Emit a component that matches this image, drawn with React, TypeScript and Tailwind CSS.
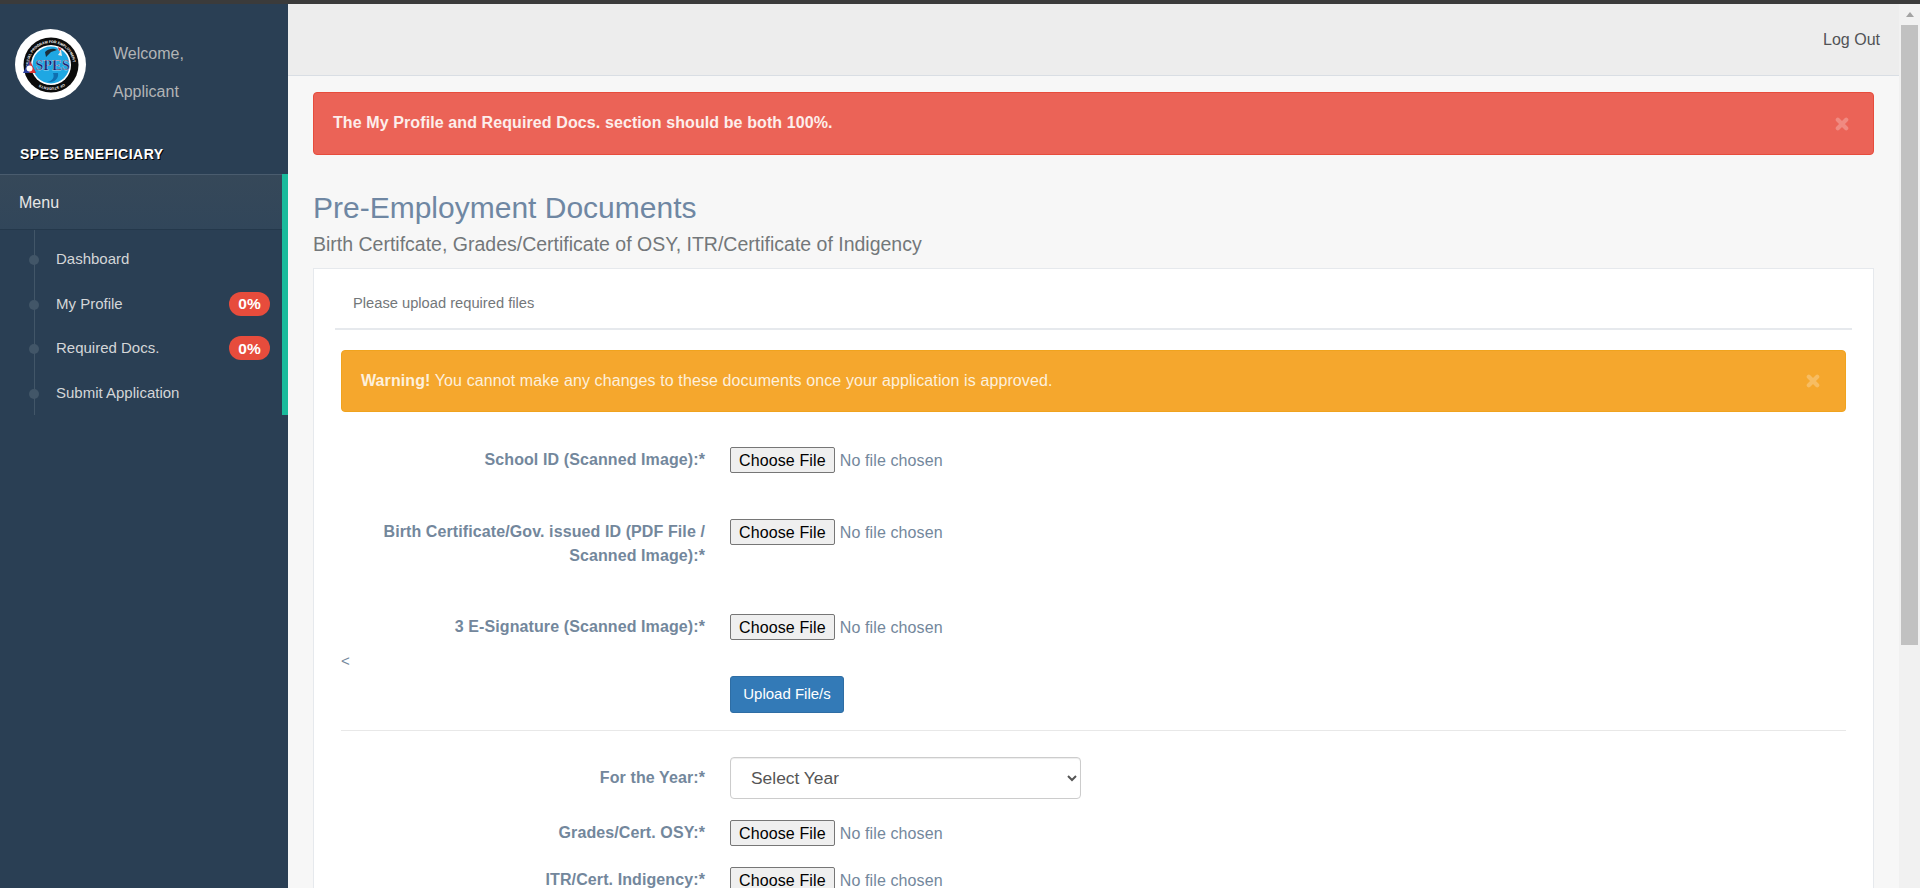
import React from "react";

function Logo() {
  return (
    <svg width="72" height="72" viewBox="0 0 72 72" className="shrink-0">
      <defs>
        <path id="ringTop" d="M14 39.9A22.3 22.3 0 1 1 58 39.9" />
        <path id="ringBottom" d="M53.5 50A22.3 22.3 0 0 1 18.5 50" />
      </defs>
      <circle cx="35.5" cy="35.5" r="35.5" fill="#ffffff" />
      <circle cx="36" cy="36" r="27.5" fill="#0b0b0b" />
      <circle cx="36" cy="36" r="20" fill="#ffffff" />
      <circle cx="36" cy="36" r="18.5" fill="#1ea7e3" />
      <path d="M30 23c4-4 9-4 12-2l-6 2-5 5z" fill="#1b2f3a" />
      <path d="M42 19l3 4-2 3 4 1-1-6z" fill="#e8e8e8" />
      <path d="M43 18l4 2-3 2z" fill="#d23a3a" />
      <path d="M38 44c2 5-1 8-6 9 7 1 12-3 11-9z" fill="#0f6fb0" />
      <text x="37.5" y="41" textAnchor="middle" fontFamily="'Liberation Serif', serif" fontWeight="700" fontSize="14.5" fill="#14206e" stroke="#ffffff" strokeWidth="0.25">SPES</text>
      <text fontFamily="'Liberation Sans', sans-serif" fontWeight="700" fontSize="3.6" fill="#ffffff">
        <textPath href="#ringTop">SPECIAL PROGRAM FOR EMPLOYMENT</textPath>
      </text>
      <text fontFamily="'Liberation Sans', sans-serif" fontWeight="700" fontSize="3.6" fill="#ffffff">
        <textPath href="#ringBottom" startOffset="16%">OF STUDENTS</textPath>
      </text>
      <path d="M8 44l6.5-13 6.5 13z" fill="#2b3f9e" />
      <path d="M14.5 31l6.5 13h-6.5z" fill="#d93636" />
      <circle cx="14.5" cy="39.5" r="3" fill="#ffffff" />
    </svg>
  );
}

function NavItem({ label, badge }: { label: string; badge?: string }) {
  return (
    <div className="relative flex h-[44.5px] items-center pl-[56px] pr-[12px] text-[15px] text-[#d4d6d8]">
      <span className="absolute left-[29px] top-[18px] h-[10px] w-[10px] rounded-full bg-[#425668]" />
      <span className="flex-1">{label}</span>
      {badge && (
        <span className="flex h-[24px] w-[41px] items-center justify-center rounded-full bg-[#E74C3C] text-[15.5px] font-bold text-white">
          {badge}
        </span>
      )}
    </div>
  );
}

function Sidebar() {
  return (
    <aside className="flex w-[288px] shrink-0 flex-col bg-[#2A3F54]">
      <div className="flex h-[135px] items-start pl-[15px] pt-[25px]">
        <Logo />
        <div className="ml-[26px] pt-[6px] text-[16px] leading-[38px] text-[#b2b4b6]">
          <div>Welcome,</div>
          <div>Applicant</div>
        </div>
      </div>
      <div className="h-[35px] pl-[20px] pt-[6px] text-[14px] font-bold leading-[18px] tracking-[0.5px] text-white [text-shadow:1px_1px_#000]">
        SPES BENEFICIARY
      </div>
      <div className="border-r-[6px] border-[#1ABB9C]">
        <div className="flex h-[56px] items-center border-y border-b-[#24384b] border-t-[#4a5c6e] bg-gradient-to-b from-[#364859] to-[#31465a] pl-[19px] pt-[1px] text-[16px] text-[#E7E7E7]">
          Menu
        </div>
        <div className="relative pt-[7px]">
          <span className="absolute bottom-0 left-[34px] top-0 w-px bg-[#425668]" />
          <NavItem label="Dashboard" />
          <NavItem label="My Profile" badge="0%" />
          <NavItem label="Required Docs." badge="0%" />
          <NavItem label="Submit Application" />
        </div>
      </div>
    </aside>
  );
}

function Close() {
  return (
    <svg width="14" height="14" viewBox="0 0 14 14" className="shrink-0 opacity-25">
      <path d="M2.8 2.8l8.4 8.4M11.2 2.8l-8.4 8.4" stroke="#ffffff" strokeWidth="4.2" strokeLinecap="round" fill="none" />
    </svg>
  );
}

function FileInput() {
  return (
    <input
      type="file"
      className="block h-[26px] w-[300px] text-[16px] leading-[26px] tracking-[0.12px] text-[#73879C] file:mr-[5px] file:h-[26px] file:rounded-[2px] file:border file:border-solid file:border-[#767676] file:bg-[#efefef] file:px-[8px] file:text-[16px] file:text-black"
    />
  );
}

function Row({ label, height, children }: { label: React.ReactNode; height: string; children: React.ReactNode }) {
  return (
    <div className={`flex items-start ${height}`}>
      <label className="w-[364px] shrink-0 pt-[1px] text-right text-[16px] font-bold leading-[24px] tracking-[0.1px] text-[#73879C]">{label}</label>
      <div className="ml-[25px]">{children}</div>
    </div>
  );
}

export default function App() {
  return (
    <div className="flex h-[888px] flex-col overflow-hidden bg-[#F7F7F7] font-['Liberation_Sans',Arial,sans-serif]">
      <div className="h-[4px] shrink-0 bg-[#3b3b3b]" />
      <div className="flex min-h-0 flex-1">
        <Sidebar />
        <main className="min-w-0 flex-1 overflow-hidden">
          <div className="flex h-[72px] items-center justify-end border-b border-[#D9DEE4] bg-[#EDEDED] pr-[19px] text-[16px] text-[#515356]">
            Log Out
          </div>
          <div className="px-[25px] pt-[16px]">
            <div className="flex h-[63px] items-center justify-between rounded-[4px] border border-[#E74C3C] bg-[#EB6357] pl-[19px] pr-[24px] text-[16px] font-bold tracking-[0.1px] text-[#fdeeeb]">
              <span className="-translate-y-[1px]">The My Profile and Required Docs. section should be both 100%.</span>
              <Close />
            </div>
            <h3 className="mt-[35px] text-[30px] font-normal leading-[36px] text-[#6F87A3]">Pre-Employment Documents</h3>
            <div className="mt-[5px] text-[19.5px] leading-[26px] text-[#73777a]">
              Birth Certifcate, Grades/Certificate of OSY, ITR/Certificate of Indigency
            </div>
            <section className="mt-[11px] border border-[#E6E9ED] bg-white px-[21px] pt-[10px]">
              <div className="flex h-[51px] items-center border-b-2 border-[#E6E9ED] pl-[18px] text-[14.7px] text-[#73777a]">
                Please upload required files
              </div>
              <div className="px-[6px] pt-[20px]">
                <div className="flex h-[62px] items-center justify-between rounded-[4px] border border-[#F0A31E] bg-[#F5A72D] pl-[19px] pr-[25px] text-[16px] tracking-[0.1px] text-[#fdf0dc]">
                  <span>
                    <b>Warning!</b> You cannot make any changes to these documents once your application is approved.
                  </span>
                  <Close />
                </div>
                <div className="mt-[35px]">
                  <Row label="School ID (Scanned Image):*" height="h-[72px]">
                    <FileInput />
                  </Row>
                  <Row
                    label={
                      <>
                        Birth Certificate/Gov. issued ID (PDF File /<br />
                        Scanned Image):*
                      </>
                    }
                    height="h-[95px]"
                  >
                    <FileInput />
                  </Row>
                  <Row label="3 E-Signature (Scanned Image):*" height="h-[62px]">
                    <FileInput />
                  </Row>
                </div>
                <div className="relative pl-[389px]">
                  <span className="absolute left-0 top-[-25px] text-[15px] leading-[20px] text-[#73879C]">&lt;</span>
                  <button className="h-[37px] w-[114px] rounded-[3px] border border-[#2E6DA4] bg-[#337AB7] text-[15px] text-white">
                    Upload File/s
                  </button>
                </div>
                <hr className="mt-[17px] border-t border-[#e8e8e8]" />
                <div className="mt-[26px]">
                  <div className="flex h-[63px] items-start">
                    <label className="w-[364px] shrink-0 pt-[9px] text-right text-[16px] font-bold leading-[24px] tracking-[0.1px] text-[#73879C]">For the Year:*</label>
                    <select className="ml-[25px] h-[42px] w-[351px] appearance-auto rounded-[4px] border border-[#ccc] bg-white pl-[16px] text-[17.4px] text-[#555] shadow-[inset_0_1px_1px_rgba(0,0,0,0.075)]">
                      <option>Select Year</option>
                    </select>
                  </div>
                  <Row label="Grades/Cert. OSY:*" height="h-[47px]">
                    <FileInput />
                  </Row>
                  <Row label="ITR/Cert. Indigency:*" height="h-[47px]">
                    <FileInput />
                  </Row>
                </div>
              </div>
            </section>
          </div>
        </main>
        <div className="flex w-[21px] shrink-0 flex-col bg-[#F1F1F1] px-[2px]">
          <div className="flex h-[21px] items-center justify-center">
            <span className="h-0 w-0 border-x-[4px] border-b-[5px] border-x-transparent border-b-[#a3a3a3]" />
          </div>
          <div className="h-[620px] bg-[#C1C1C1]" />
        </div>
      </div>
    </div>
  );
}
